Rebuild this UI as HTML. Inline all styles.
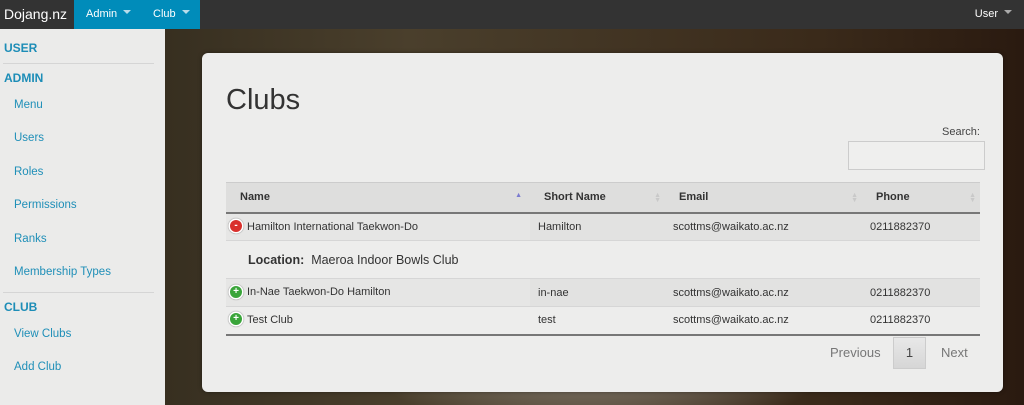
<!DOCTYPE html>
<html><head><style>
*{box-sizing:border-box;margin:0;padding:0}
body{width:1024px;height:405px;overflow:hidden;font-family:"Liberation Sans",sans-serif;position:relative;
background:radial-gradient(ellipse 300px 200px at 600px 250px,#d8d4cc,transparent),linear-gradient(90deg,#2a2418 0,#4a3f2c 40%,#3a2a1a 80%,#2a1a10 100%);}
.top{position:absolute;left:0;top:0;width:1024px;height:29px;background:#333;color:#fff}
.brand{position:absolute;left:4px;top:6px;font-size:14px}
.blue{position:absolute;left:74px;top:0;width:126px;height:29px;background:#008cba;font-size:11px}
.blue span{position:absolute;top:8px}
.caret{display:inline-block;border:4px solid transparent;border-top-color:#b8dcea;margin-left:6px;vertical-align:-1px}
.user{position:absolute;right:12px;top:8px;font-size:11px}
.side{position:absolute;left:0;top:29px;width:165px;height:376px;background:#ebebea}
.side div{position:absolute;color:#1f8fb8;font-size:11.5px}
.side .h{left:4px;font-weight:bold;font-size:12px;color:#1d8db7}
.side .i{left:14px}
.side hr{position:absolute;left:3px;width:151px;border:0;border-top:1px solid #d5d5d5}
.card{position:absolute;left:202px;top:53px;width:801px;height:339px;background:#ededec;border-radius:6px;box-shadow:0 0 4px rgba(0,0,0,.4)}
h1{position:absolute;left:24px;top:31px;font-size:29px;font-weight:normal;color:#333}
.slabel{position:absolute;left:740px;top:73px;font-size:11px;color:#444}
.sbox{position:absolute;left:646px;top:88px;width:137px;height:29px;border:1px solid #ccc;background:#efefee}
table{position:absolute;left:24px;top:129px;width:754px;border-collapse:collapse;font-size:11px;color:#333}
th{background:#dededd;text-align:left;height:30px;padding-left:14px;border-bottom:2px solid #777;border-top:1px solid #ccc;position:relative;font-size:11px}
td{height:28px;border-top:1px solid #d6d6d6;padding-left:8px;white-space:nowrap;vertical-align:middle}
tr.odd td{background:#e2e2e1}
tr.odd td.s{background:#e6e6e5}
tr.last td{border-bottom:2px solid #777}
.ic{display:inline-block;width:12px;height:12px;border-radius:50%;color:#fff;font-size:10px;line-height:12px;text-align:center;margin:0 5px 0 -4px;vertical-align:middle;box-shadow:0 0 0 1.5px #fff,0 0 1px 2px #aaa;font-weight:bold;position:relative;top:-1px}
.srt{position:absolute;right:4px;top:10px;color:#c9c9c9;font-size:7px;line-height:5px}
.pg{position:absolute;font-size:13px;color:#777}
</style></head><body>
<div class="top"><div class="brand">Dojang.nz</div>
<div class="blue"><span style="left:12px">Admin<i class="caret"></i></span><span style="left:79px">Club<i class="caret"></i></span></div>
<div class="user">User<i class="caret" style="border-top-color:#aaa"></i></div></div>
<div class="side">
<div class="h" style="top:12px">USER</div><hr style="top:34px">
<div class="h" style="top:42px">ADMIN</div>
<div class="i" style="top:70px">Menu</div>
<div class="i" style="top:103px">Users</div>
<div class="i" style="top:137px">Roles</div>
<div class="i" style="top:170px">Permissions</div>
<div class="i" style="top:204px">Ranks</div>
<div class="i" style="top:237px">Membership Types</div><hr style="top:263px">
<div class="h" style="top:271px">CLUB</div>
<div class="i" style="top:299px">View Clubs</div>
<div class="i" style="top:332px">Add Club</div>
</div>
<div class="card">
<h1>Clubs</h1>
<div class="slabel">Search:</div><div class="sbox"></div>
<table>
<tr><th style="width:304px">Name<span class="srt" style="color:#7b7bd0;right:8px">▲</span></th><th style="width:135px">Short Name<span class="srt">▲<br>▼</span></th><th style="width:197px">Email<span class="srt">▲<br>▼</span></th><th>Phone<span class="srt">▲<br>▼</span></th></tr>
<tr class="odd"><td class="s"><span class="ic" style="background:#d9302c">-</span>Hamilton International Taekwon-Do</td><td>Hamilton</td><td>scottms@waikato.ac.nz</td><td>0211882370</td></tr>
<tr><td colspan="4" style="height:38px;padding-left:22px;font-size:12.5px"><b>Location:</b>&nbsp; Maeroa Indoor Bowls Club</td></tr>
<tr class="odd"><td class="s"><span class="ic" style="background:#3aa53a">+</span>In-Nae Taekwon-Do Hamilton</td><td>in-nae</td><td>scottms@waikato.ac.nz</td><td>0211882370</td></tr>
<tr class="last"><td><span class="ic" style="background:#3aa53a">+</span>Test Club</td><td>test</td><td>scottms@waikato.ac.nz</td><td>0211882370</td></tr>
</table>
<div class="pg" style="left:628px;top:292px">Previous</div>
<div style="position:absolute;left:691px;top:284px;width:33px;height:32px;border:1px solid #ccc;background:linear-gradient(#e8e8e8,#d6d6d6);font-size:13px;color:#444;text-align:center;line-height:30px">1</div>
<div class="pg" style="left:739px;top:292px">Next</div>
</div>
</body></html>
